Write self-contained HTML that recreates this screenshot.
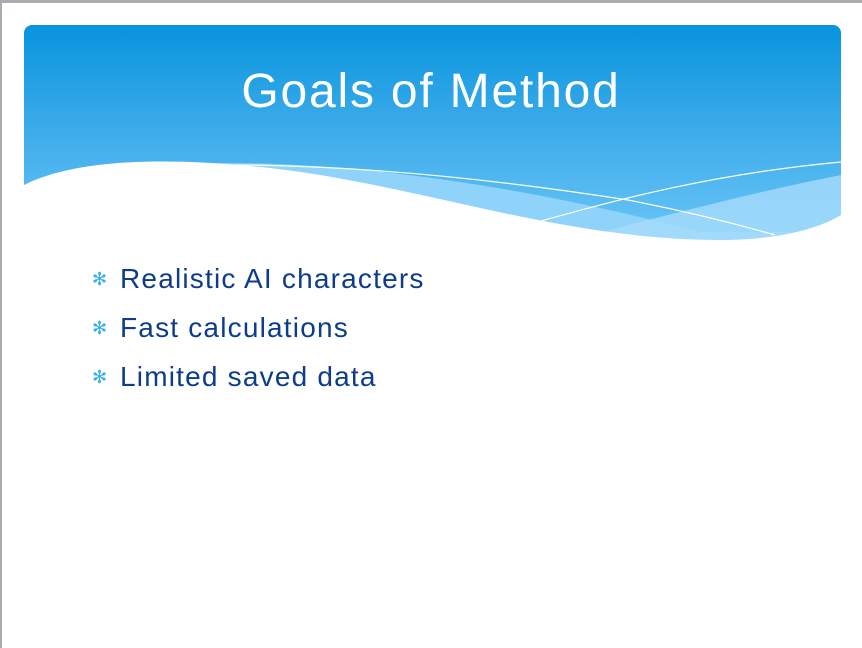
<!DOCTYPE html>
<html><head><meta charset="utf-8"><style>
html,body{margin:0;padding:0;background:#fff;width:862px;height:648px;overflow:hidden;position:relative}
.topb{position:absolute;left:0;top:0;width:862px;height:3px;background:#a9adb2}
.leftb{position:absolute;left:0;top:0;width:2px;height:648px;background:#a9adb2}
.hdr{position:absolute;left:24px;top:25px;width:817px;height:220px;border-radius:8px 8px 0 0;overflow:hidden;background:linear-gradient(#0794de 0%,#3aaae9 45%,#6cc6f8 100%)}
svg{position:absolute;left:0;top:0}
.title{position:absolute;left:0;top:64px;width:862px;text-align:center;color:#fff;font-family:"Liberation Sans",sans-serif;font-size:48px;letter-spacing:1.8px}
ul{position:absolute;left:92px;top:259px;margin:0;padding:0;list-style:none;font-family:"Liberation Sans",sans-serif;font-size:28px;color:#0d3c8a}
li{height:49px;line-height:40px;white-space:nowrap;letter-spacing:1.2px}
li span{color:#35aef0;font-size:18px;display:inline-block;width:28px;vertical-align:3px;letter-spacing:0}
</style></head><body>
<div class="topb"></div><div class="leftb"></div>
<div class="hdr">
<svg width="817" height="220" viewBox="24 25 817 220">
<path d="M160 165 C330 155 520 185 700 232 L841 232 L841 245 L24 245Z" fill="#8fd2fa"/>
<path d="M841 175 C740 195 650 220 570 240 L841 245Z" fill="#a6dcfb" opacity="0.8"/>
<path d="M24 185 C70 162 150 155 270 168 C420 185 560 240 720 240 C780 240 820 228 841 215 L841 250 L24 250Z" fill="#fff"/>
<path d="M165 166 C330 160 500 180 628 200 C690 212 740 225 775 235" stroke="#fff" stroke-width="1.2" fill="none"/>
<path d="M530 224 C600 205 700 175 841 162" stroke="#fff" stroke-width="1.2" fill="none"/>
</svg>
</div>
<div class="title">Goals of Method</div>
<ul>
<li><span>✻</span>Realistic AI characters</li>
<li><span>✻</span>Fast calculations</li>
<li><span>✻</span>Limited saved data</li>
</ul>
</body></html>
